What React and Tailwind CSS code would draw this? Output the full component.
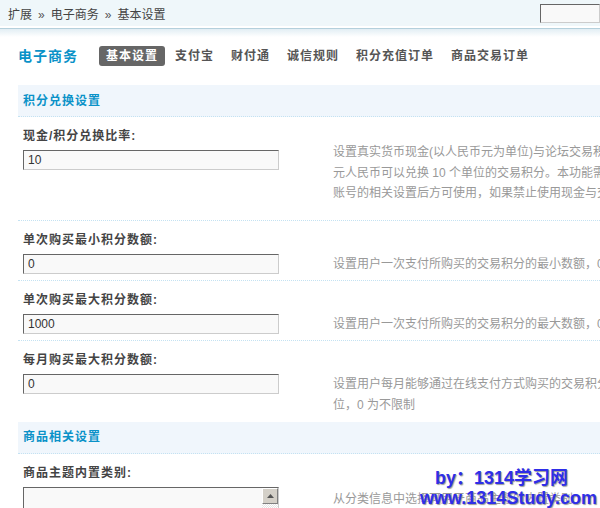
const tabs = ['基本设置', '支付宝', '财付通', '诚信规则', '积分充值订单', '商品交易订单'];

const Field = ({ value }) => (
  <div className="w-[256px] h-[20px] shrink-0 bg-[#f9f9f9] border border-t-[#666] border-l-[#666] border-b-[#ccc] border-r-[#ccc] pl-[4px] text-[12px] leading-[18px] text-[#333]">
    {value}
  </div>
);

const Label = ({ children }) => (
  <div className="pt-[12px] pb-[7px] pl-[5px] text-[12px] leading-[14px] font-bold tracking-[1px] text-[#444]">
    {children}
  </div>
);

const Header = ({ children }) => (
  <div className="h-[32px] flex items-center pl-[5px] bg-[#f0f6fc] border-b border-dotted border-[#c4e2f2] text-[12px] font-bold tracking-[1px] text-[#0a92c8]">
    {children}
  </div>
);

export default function App() {
  return (
    <div className="relative w-[600px] h-[508px] overflow-hidden bg-white font-['Liberation_Sans','Noto_Sans_CJK_SC',sans-serif]">
      {/* breadcrumb */}
      <div className="h-[26px] flex items-center pl-[8px] bg-[#eff7fa] text-[12px] text-[#444]">
        <div className="flex items-center pt-[3px]">
          <span>扩展</span>
          <span className="mx-[6px] text-[#555]">»</span>
          <span>电子商务</span>
          <span className="mx-[6px] text-[#555]">»</span>
          <span>基本设置</span>
        </div>
        <div className="ml-auto w-[60px] h-[19px] mt-[1px] bg-[#f9f9f9] border border-t-[#666] border-l-[#666] border-b-[#ccc] border-r-[#ccc]" />
      </div>
      <div className="h-[2px] bg-white" />
      <div className="h-[1px] bg-[#b4d0dc]" />
      <div className="h-[8px] bg-gradient-to-b from-[#e2eef4] to-white" />

      {/* title + tabs */}
      <div className="mt-[9px] h-[20px] flex items-center pl-[18px]">
        <span className="text-[14px] font-bold tracking-[1px] text-[#0a92c8] mr-[21px]">电子商务</span>
        <div className="flex gap-[3px]">
          {tabs.map((t, i) => (
            <span
              key={t}
              className={
                i === 0
                  ? 'h-[20px] px-[7px] flex items-center rounded-[3px] bg-[#666] text-white text-[12px] font-bold tracking-[1px]'
                  : 'h-[20px] px-[7px] flex items-center text-[#555] text-[12px] font-bold tracking-[1px]'
              }
            >
              {t}
            </span>
          ))}
        </div>
      </div>

      <div className="mt-[19px] ml-[18px]">
        <Header>积分兑换设置</Header>

        <div className="border-b border-dotted border-[#c4e2f2]">
          <Label>现金/积分兑换比率:</Label>
          <div className="flex pl-[5px] pb-[16px]">
            <Field value="10" />
            <div className="ml-[54px] -mt-[8px] text-[12px] leading-[20.5px] text-[#999] whitespace-nowrap">
              <div>设置真实货币现金(以人民币元为单位)与论坛交易积分的兑换比率</div>
              <div>元人民币可以兑换 10 个单位的交易积分。本功能需要在支付宝中设置</div>
              <div>账号的相关设置后方可使用，如果禁止使用现金与交易积分兑换</div>
            </div>
          </div>
        </div>

        <div className="border-b border-dotted border-[#c4e2f2]">
          <Label>单次购买最小积分数额:</Label>
          <div className="flex pl-[5px] pb-[6px]">
            <Field value="0" />
            <div className="ml-[54px] text-[12px] leading-[20px] text-[#999] whitespace-nowrap">
              设置用户一次支付所购买的交易积分的最小数额，0 为不限制
            </div>
          </div>
        </div>

        <div className="border-b border-dotted border-[#c4e2f2]">
          <Label>单次购买最大积分数额:</Label>
          <div className="flex pl-[5px] pb-[6px]">
            <Field value="1000" />
            <div className="ml-[54px] text-[12px] leading-[20px] text-[#999] whitespace-nowrap">
              设置用户一次支付所购买的交易积分的最大数额，0 为不限制
            </div>
          </div>
        </div>

        <div>
          <Label>每月购买最大积分数额:</Label>
          <div className="flex pl-[5px] pb-[6px]">
            <Field value="0" />
            <div className="ml-[54px] text-[12px] leading-[21px] text-[#999] whitespace-nowrap">
              <div>设置用户每月能够通过在线支付方式购买的交易积分的最大数额，单</div>
              <div>位，0 为不限制</div>
            </div>
          </div>
        </div>

        <Header>商品相关设置</Header>

        <div>
          <Label>商品主题内置类别:</Label>
          <div className="flex pl-[5px]">
            <div className="w-[256px] h-[60px] shrink-0 flex justify-end bg-[#f9f9f9] border border-t-[#666] border-l-[#666] border-b-[#ccc] border-r-[#ccc]">
              <div className="w-[16px] flex flex-col bg-[repeating-conic-gradient(#e4e4e4_0%_25%,#ffffff_0%_50%)] bg-[length:2px_2px]">
                <div className="h-[16px] flex items-center justify-center bg-[#d4d0c8] border border-t-white border-l-white border-b-[#808080] border-r-[#808080]">
                  <svg width="7" height="4" viewBox="0 0 7 4">
                    <path d="M0 4 L3.5 0 L7 4 Z" fill="#555" />
                  </svg>
                </div>
              </div>
            </div>
            <div className="ml-[54px] mt-[2px] text-[12px] leading-[20px] text-[#999] whitespace-nowrap">
              从分类信息中选择可用于商品主题的内置类别
            </div>
          </div>
        </div>
      </div>

      {/* watermark */}
      <div className="absolute left-[435px] top-[467px] text-[18px] leading-[22px] font-bold text-[#2e2ee8] [text-shadow:1px_1px_1px_#9a9a9a]">
        by：1314学习网
      </div>
      <div className="absolute left-[420px] top-[487px] text-[18px] leading-[22px] font-bold text-[#2e2ee8] [text-shadow:1px_1px_1px_#9a9a9a]">
        www.1314Study.com
      </div>
    </div>
  );
}
